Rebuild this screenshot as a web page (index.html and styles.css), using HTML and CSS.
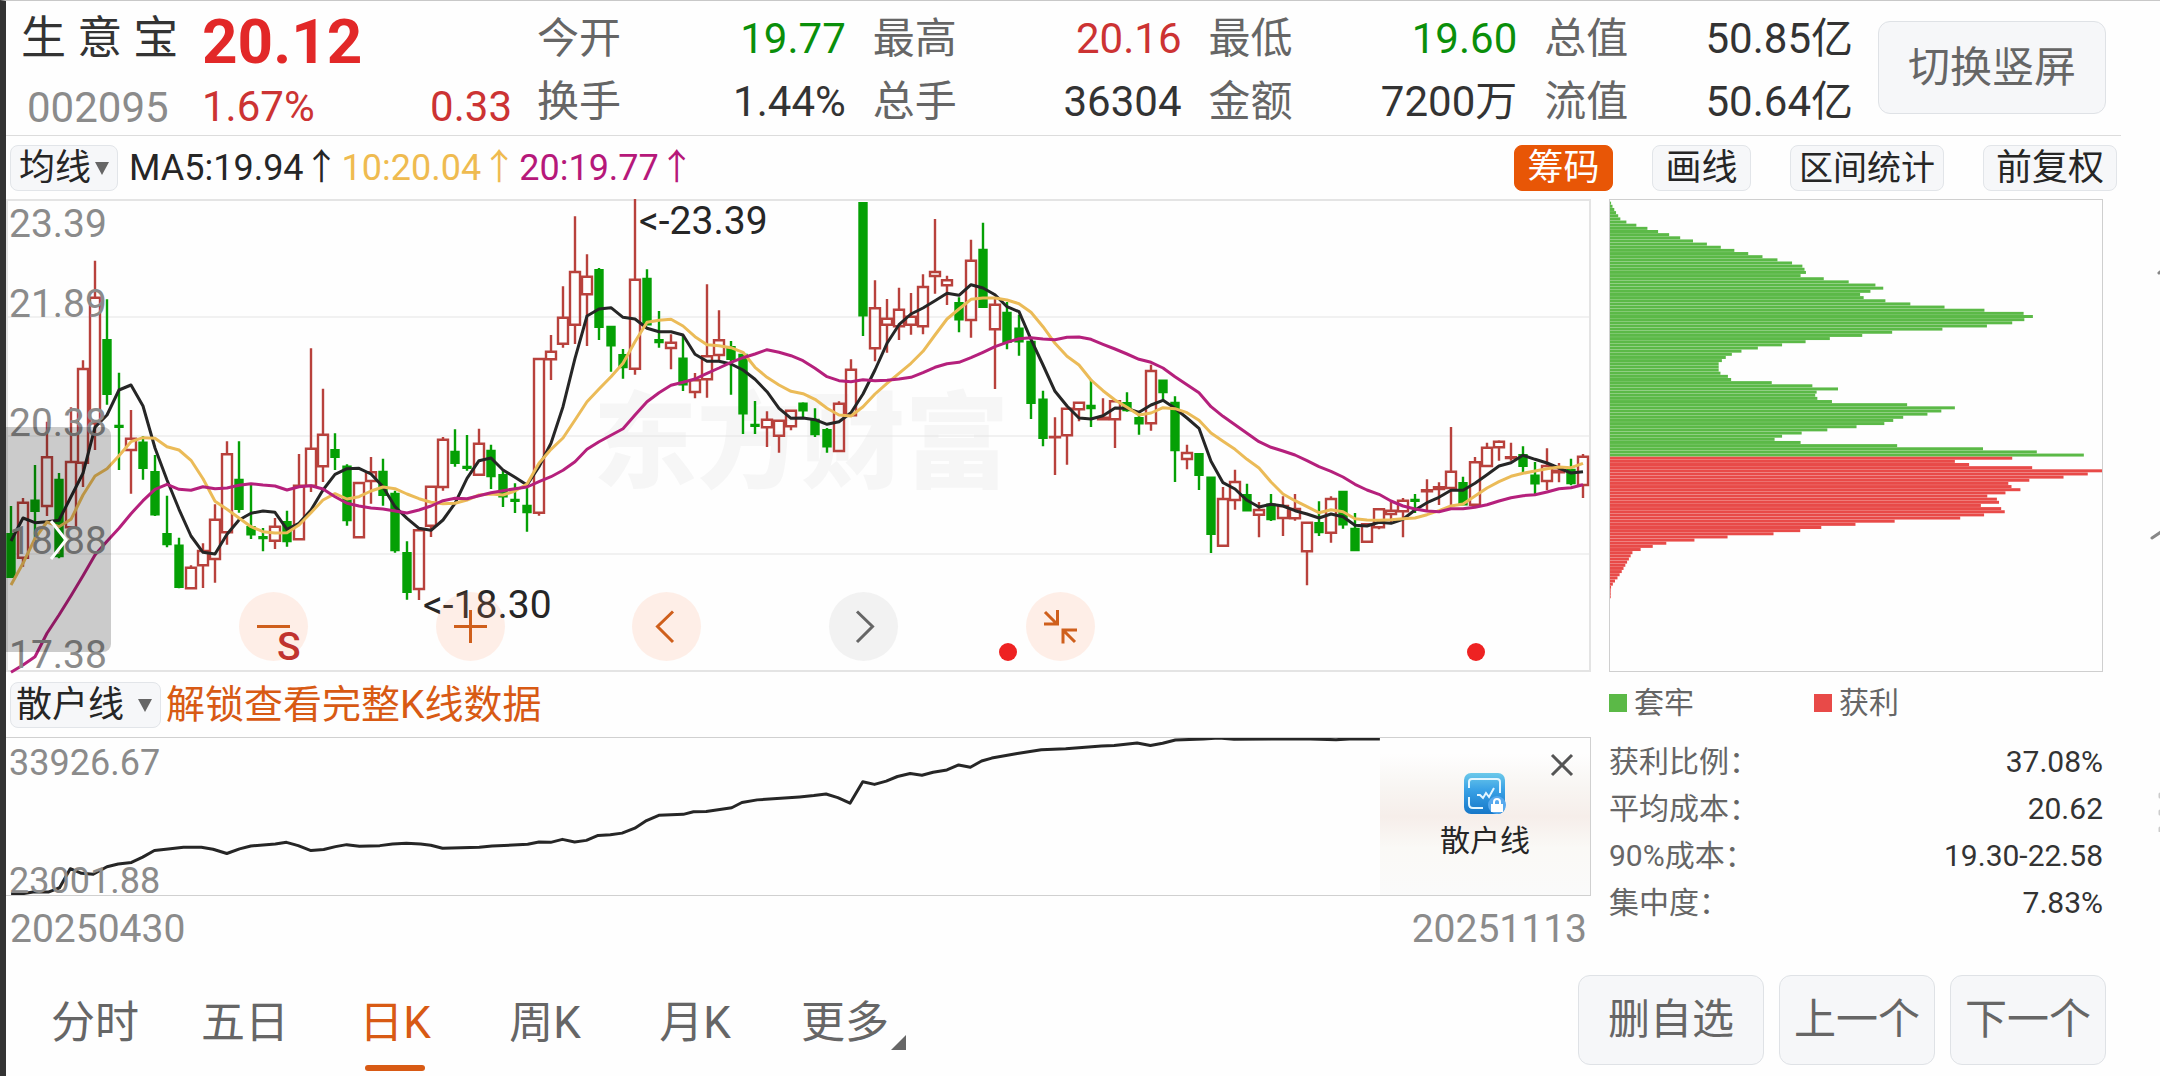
FILE: index.html
```html
<!DOCTYPE html>
<html lang="zh-CN">
<head>
<meta charset="utf-8">
<meta name="viewport" content="width=device-width, initial-scale=1">
<title>生意宝 002095</title>
<link rel="stylesheet" href="styles.css">
</head>
<body>
<header class="header">
  <div class="quote">
    <h1 class="name">生 意 宝</h1>
    <strong class="price">20.12</strong>
    <span class="code">002095</span>
    <div class="change"><span>1.67%</span><span>0.33</span></div>
  </div>
  <dl class="stats">
    <div class="stat"><dt>今开</dt><dd class="down">19.77</dd></div>
    <div class="stat"><dt>最高</dt><dd class="up">20.16</dd></div>
    <div class="stat"><dt>最低</dt><dd class="down">19.60</dd></div>
    <div class="stat"><dt>总值</dt><dd>50.85亿</dd></div>
    <div class="stat"><dt>换手</dt><dd>1.44%</dd></div>
    <div class="stat"><dt>总手</dt><dd>36304</dd></div>
    <div class="stat"><dt>金额</dt><dd>7200万</dd></div>
    <div class="stat"><dt>流值</dt><dd>50.64亿</dd></div>
  </dl>
  <button class="btn btn-rotate" type="button">切换竖屏</button>
</header>

<div class="toolbar">
  <div class="picker picker-ma">
    <select aria-label="主图指标"><option>均线</option></select>
    <svg class="caret" viewBox="0 0 14 13" aria-hidden="true"><path d="M0 0h14L7 13z"/></svg>
  </div>
  <div class="ma-values">
    <span class="ma5">MA5:19.94↑</span>
    <span class="ma10">10:20.04↑</span>
    <span class="ma20">20:19.77↑</span>
  </div>
  <div class="tools">
    <button class="tool tool-on" type="button">筹码</button>
    <button class="tool" type="button">画线</button>
    <button class="tool tool-long" type="button">区间统计</button>
    <button class="tool" type="button">前复权</button>
  </div>
</div>

<main class="main">
  <section class="charts">
    <div class="kline">
      <svg class="plot" viewBox="0 0 1585 473" role="img" aria-label="日K线">
        <text class="watermark" x="587" y="281">东方财富</text>
        <g class="grid">
          <path d="M0 118H1585M0 237H1585M0 355H1585"/>
          <rect x="1" y="1" width="1583" height="471"/>
        </g>
        <g id="candles"></g>
        <g id="averages"></g>
        <g class="axis">
          <text x="3" y="38">23.39</text>
          <text x="3" y="118">21.89</text>
          <text x="3" y="237">20.38</text>
          <text x="3" y="355">18.88</text>
          <text x="3" y="469">17.38</text>
        </g>
        <g class="extreme">
          <text x="633" y="35">&lt;-23.39</text>
          <text x="417" y="419">&lt;-18.30</text>
        </g>
        <circle class="dot" cx="1002" cy="453" r="9"/>
        <circle class="dot" cx="1470" cy="453" r="9"/>
      </svg>
      <div class="controls">
        <button class="round" type="button" aria-label="缩小"><svg viewBox="0 0 69 69"><path d="M18 34.500h33"/></svg></button>
        <button class="round" type="button" aria-label="放大"><svg viewBox="0 0 69 69"><path d="M18 34.500h33M34.500 18v33"/></svg></button>
        <button class="round" type="button" aria-label="左移"><svg viewBox="0 0 69 69"><path d="M41 19.500L25.500 34.500L41 50"/></svg></button>
        <button class="round round-off" type="button" aria-label="右移"><svg viewBox="0 0 69 69"><path d="M28 19.500L43.500 34.500L28 50"/></svg></button>
        <button class="round" type="button" aria-label="收起"><svg viewBox="0 0 69 69"><path d="M19 20L31 32M18 32h13.500V18M49 50L37 38M51 38H37v13.500"/></svg></button>
      </div>
      <span class="sell">S</span>
      <button class="drawer" type="button" aria-label="展开"><svg viewBox="0 0 20 44"><path d="M2 3L17 22L2 41"/></svg></button>
    </div>

    <div class="subbar">
      <div class="picker picker-sub">
        <select aria-label="副图指标"><option>散户线</option></select>
        <svg class="caret" viewBox="0 0 14 13" aria-hidden="true"><path d="M0 0h14L7 13z"/></svg>
      </div>
      <a class="unlock" href="#">解锁查看完整K线数据</a>
    </div>

    <div class="retail">
      <svg class="retail-plot" viewBox="12 200 3106 477" preserveAspectRatio="none" role="img" aria-label="散户线">
        <polyline points="22,673 45,673 65,668 95,668 117,655 138,597 160,611 183,614 210,591 232,583 258,578 280,562 303,542 330,537 360,532 395,532 418,538 445,551 470,537 492,528 540,522 562,517 585,527 610,542 635,539 658,530 680,524 705,529 745,527 770,522 797,520 825,522 845,526 868,535 940,532 965,528 1035,523 1057,516 1080,517 1103,508 1127,516 1150,511 1173,496 1197,494 1220,489 1245,474 1268,451 1292,435 1340,432 1360,424 1385,423 1435,412 1455,396 1485,388 1568,379 1596,375 1620,370 1643,381 1667,398 1692,333 1715,341 1738,331 1760,317 1785,308 1808,313 1830,304 1857,297 1880,282 1903,289 1925,270 1945,261 1995,247 2042,236 2090,233 2160,224 2185,223 2230,215 2256,223 2280,216 2305,206 2360,203 2390,200 2420,204 2500,203 2570,203 2620,205 2655,202 2706,203"/>
      </svg>
      <span class="range range-max">33926.67</span>
      <span class="range range-min">23001.88</span>
      <div class="promo">
        <svg class="promo-icon" viewBox="0 0 42 42" aria-hidden="true">
          <defs><linearGradient id="blue" x1="0" y1="0" x2="0" y2="1"><stop offset="0" stop-color="#6cc9ea"/><stop offset=".4" stop-color="#3aa2e6"/><stop offset="1" stop-color="#1677c8"/></linearGradient></defs>
          <rect width="41" height="41" rx="7" fill="url(#blue)"/>
          <path class="promo-line" d="M5 15V9q0-3 3-3h25q3 0 3 3v11M5 24v7q0 4 4 4h10M13 22h3l3 3 3-5 3 4 5-9"/>
          <circle cx="33" cy="32" r="9" fill="#57a9ee"/>
          <path d="M27 31h12v8H27z" fill="#fff"/>
          <path d="M30 31v-2q0-3 3-3t3 3v2" fill="none" stroke="#fff" stroke-width="2"/>
        </svg>
        <span>散户线</span>
        <button class="close" type="button" aria-label="关闭"><svg viewBox="0 0 24 24"><path d="M2 2L22 22M22 2L2 22"/></svg></button>
      </div>
    </div>
    <div class="dates"><time>20250430</time><time>20251113</time></div>
  </section>

  <aside class="chips">
    <svg class="chip-plot" viewBox="27 28 1381 1418" preserveAspectRatio="none" role="img" aria-label="筹码分布"><g id="chips"></g></svg>
    <ul class="legend"><li class="trapped">套牢</li><li class="profit">获利</li></ul>
    <dl class="facts">
      <div><dt>获利比例：</dt><dd>37.08%</dd></div>
      <div><dt>平均成本：</dt><dd>20.62</dd></div>
      <div><dt>90%成本：</dt><dd>19.30-22.58</dd></div>
      <div><dt>集中度：</dt><dd>7.83%</dd></div>
    </dl>
  </aside>
</main>

<footer class="footer">
  <nav class="tabs">
    <a href="#">分时</a>
    <a href="#">五日</a>
    <a class="current" href="#">日K</a>
    <a href="#">周K</a>
    <a href="#">月K</a>
    <a class="more" href="#">更多</a>
  </nav>
  <div class="actions">
    <button class="btn btn-remove" type="button">删自选</button>
    <button class="btn" type="button">上一个</button>
    <button class="btn" type="button">下一个</button>
  </div>
</footer>

<svg class="edge" viewBox="0 0 10 570" aria-hidden="true"><path d="M9 11L14 7M2 276L14 268"/><path class="edge-dots" d="M10 532v3M10 549v3M10 566v3"/></svg>
<script src="chart.js"></script>
</body>
</html>
```
FILE: styles.css
```css
* { box-sizing: border-box; }

body {
  margin: 0;
  min-height: 100vh;
  position: relative;
  overflow-x: hidden;
  background: #fefefe;
  border-left: 6px solid #333;
  border-top: 1px solid #c8c8c8;
  color: #333;
  font-family: Roboto, "Noto Sans CJK SC", sans-serif;
  font-size: 42px;
}

h1, dl, dd, ul { margin: 0; padding: 0; font-weight: 400; }
button, select { font: inherit; color: inherit; margin: 0; padding: 0; }
button { cursor: pointer; }
a { color: inherit; text-decoration: none; }
svg { display: block; }

.btn {
  height: 90px;
  width: 156px;
  border: 1px solid #dfe2e6;
  border-radius: 12px;
  background: #f6f7f9;
  color: #666;
  font-size: 42px;
  line-height: 88px;
}

/* quote header */
.header {
  display: flex;
  height: 135px;
  margin-right: 39px;
  padding: 6px 15px 0 15px;
  border-bottom: 1px solid #dcdcdc;
}
.quote {
  flex: 0 0 491px;
  display: grid;
  grid-template-columns: 181px 1fr;
  grid-template-rows: 70px 57px;
  margin-right: 25px;
}
.name { font-size: 45px; line-height: 64px; white-space: nowrap; }
.price { font-size: 62px; line-height: 70px; font-weight: 700; color: #e22828; }
.code { padding-left: 6px; line-height: 62px; color: #8b8b8b; }
.change { display: flex; justify-content: space-between; line-height: 60px; color: #cc3333; }
.stats {
  flex: 1;
  display: grid;
  grid-template-columns: repeat(4, 1fr);
  grid-auto-rows: 63px;
  column-gap: 27px;
  line-height: 63px;
}
.stat { display: flex; justify-content: space-between; }
.stat dt { color: #666; }
.up { color: #cc3333; }
.down { color: #0a8f0a; }
.btn-rotate { width: 228px; height: 93px; margin: 14px 0 0 25px; }

/* indicator toolbar */
.toolbar {
  display: flex;
  align-items: center;
  height: 63px;
  padding: 0 43px 0 4px;
  font-size: 36px;
}
.picker { position: relative; height: 46px; font-size: 36px; }
.picker select {
  appearance: none;
  width: 100%;
  height: 100%;
  border: 1px solid #e2e5e9;
  border-radius: 8px;
  background: #f6f7f9;
  color: #262626;
}
.picker-ma { width: 108px; margin-right: 11px; }
.picker-ma select { padding-left: 8px; }
.picker-sub { width: 151px; margin-right: 5px; }
.picker-sub select { padding-left: 5px; }
.caret {
  position: absolute;
  right: 9px;
  top: 17px;
  width: 14px;
  height: 13px;
  fill: #666;
  pointer-events: none;
}
.ma-values { display: flex; gap: 2px; line-height: 46px; white-space: nowrap; }
.ma5 { color: #262626; }
.ma10 { color: #efbb50; }
.ma20 { color: #b6187a; }
.tools { display: flex; gap: 39px; margin-left: auto; }
.tool {
  height: 46px;
  min-width: 99px;
  padding: 0 12px;
  border: 1px solid #e2e5e9;
  border-radius: 8px;
  background: #f6f7f9;
  color: #262626;
  line-height: 44px;
}
.tool-on { border-color: #e85606; background: #e85606; color: #fff; }
.tool-long { padding: 0 8px; font-size: 34px; }

/* charts */
.main {
  display: grid;
  grid-template-columns: 1585fr 494fr;
  column-gap: 18px;
  padding-right: 57px;
}
.kline { position: relative; }
.plot { width: 100%; height: auto; overflow: visible; }
.plot text { font-size: 39px; }
.plot .watermark { font-size: 104px; font-weight: 900; fill: #f6f6f6; }
.grid { fill: none; stroke: #e4e4e4; stroke-width: 1; }
.grid rect { stroke-width: 2; }
.axis { fill: #8b8b8b; }
.extreme { fill: #262626; }
.dot { fill: #ee2222; }
.rise { fill: none; stroke: #b8413c; stroke-width: 2.4; }
.fall { fill: #05a005; stroke: #05a005; stroke-width: 2.4; }
.average { fill: none; stroke-width: 3; stroke-linejoin: round; }
.average.ma5 { stroke: #262626; }
.average.ma10 { stroke: #ebbb58; }
.average.ma20 { stroke: #b5207c; }

.controls {
  position: absolute;
  left: 14.7%;
  bottom: 11px;
  width: 54%;
  display: flex;
  justify-content: space-between;
}
.round {
  width: 69px;
  height: 69px;
  border: 0;
  border-radius: 50%;
  background: rgba(255, 150, 100, .15);
  color: #cf5f1c;
}
.round svg { width: 69px; height: 69px; fill: none; stroke: currentColor; stroke-width: 3; }
.round-off { background: #f2f2f2; color: #666; }
.sell {
  position: absolute;
  left: 17.1%;
  bottom: 3px;
  font-size: 39px;
  line-height: 44px;
  font-weight: 500;
  color: #c0332f;
}
.drawer {
  position: absolute;
  left: 0;
  top: 228px;
  width: 105px;
  height: 225px;
  border: 0;
  border-radius: 0 8px 8px 0;
  background: rgba(0, 0, 0, .2);
}
.drawer svg { width: 20px; height: 44px; margin-left: 43px; fill: none; stroke: #fff; stroke-width: 3; }

.subbar { display: flex; align-items: center; height: 65px; padding-left: 4px; }
.unlock { font-size: 39px; line-height: 46px; color: #d85a14; white-space: nowrap; }

.retail {
  position: relative;
  height: 159px;
  border: 1px solid #d0d0d0;
  border-left: 0;
}
.retail-plot { width: 100%; height: 100%; fill: none; stroke: #262626; }
.retail-plot polyline { stroke-width: 3; stroke-linejoin: round; vector-effect: non-scaling-stroke; }
.range { position: absolute; left: 3px; font-size: 36px; line-height: 36px; color: #8b8b8b; }
.range-max { top: 7px; }
.range-min { bottom: -4px; }
.promo {
  position: absolute;
  top: 0;
  right: 0;
  width: 210px;
  height: 100%;
  padding-top: 35px;
  display: flex;
  flex-direction: column;
  align-items: center;
  gap: 7px;
  background: linear-gradient(#fefefe 10%, #f8f5f2 32%, #f6eeea 50%, #faf9f6 70%, #fafafa);
  font-size: 30px;
  line-height: 38px;
  color: #262626;
}
.promo-icon { width: 42px; height: 42px; overflow: visible; }
.promo-line { fill: none; stroke: #e4f6ff; stroke-width: 2; }
.close {
  position: absolute;
  top: 15px;
  right: 16px;
  border: 0;
  background: none;
}
.close svg { width: 24px; height: 24px; stroke: #555; stroke-width: 3; }
.dates {
  display: flex;
  justify-content: space-between;
  padding: 0 4px;
  font-size: 39px;
  line-height: 66px;
  color: #8b8b8b;
}

/* chip distribution */
.chips { font-size: 30px; }
.chip-plot { width: 100%; height: auto; aspect-ratio: 494 / 473; border: 1px solid #cfcfcf; }
.chip-trapped { fill: #5bb947; }
.chip-profit { fill: #e84a48; }
.legend { display: flex; list-style: none; line-height: 62px; color: #666; }
.legend li { flex: 0 0 41.5%; display: flex; align-items: center; gap: 7px; }
.legend li::before { content: ""; width: 18px; height: 18px; background: #5bb947; }
.legend .profit::before { background: #e84a48; }
.facts { padding-top: 4px; line-height: 47px; }
.facts div { display: flex; justify-content: space-between; }
.facts dt { color: #666; }

/* period tabs */
.footer {
  display: flex;
  justify-content: space-between;
  padding: 13px 54px 0 14px;
}
.tabs { display: flex; font-size: 44px; line-height: 96px; color: #666; }
.tabs a { position: relative; width: 150px; text-align: center; }
.tabs .current { color: #d85a14; }
.current::after {
  content: "";
  position: absolute;
  left: 45px;
  bottom: 0;
  width: 60px;
  height: 6px;
  border-radius: 3px;
  background: #d85a14;
}
.more::after {
  content: "";
  position: absolute;
  right: 14px;
  bottom: 21px;
  border-left: 15px solid transparent;
  border-bottom: 15px solid #666;
}
.actions { display: flex; gap: 15px; }
.btn-remove { width: 186px; }

.edge {
  position: absolute;
  right: 0;
  top: 261px;
  width: 10px;
  height: 570px;
  fill: none;
  stroke: #888;
  stroke-width: 3;
  stroke-linecap: round;
}
.edge-dots { stroke: #ccc; }
```
FILE: chart.js
```js
const NS = 'http://www.w3.org/2000/svg';

function add(parent, tag, attrs) {
  const el = document.createElementNS(NS, tag);
  for (const key in attrs) el.setAttribute(key, attrs[key]);
  parent.appendChild(el);
}

// One session per entry: direction, high, body top, body bottom, low.
// Levels are counted downwards, three to a pixel; 27 is the top of the plot.
const sessions = `
g 948 1033 1160 1160;r 924 938 1103 1130;g 825 932 962 1060;r 695 802 948 978;g 849 870 1098 1105;
r 652 816 1012 1012;r 511 537 818 891;r 212 323 700 780;g 328 451 611 644;g 548 708 710 840;
r 660 746 780 911;g 738 758 833 869;g 795 847 973 978;g 917 1033 1062 1072;g 1043 1067 1190 1195;
r 1126 1133 1195 1195;r 1060 1083 1126 1194;r 943 989 1107 1178;r 754 793 1027 1064;g 754 870 956 968;
g 885 1012 1033 1047;g 1014 1042 1044 1084;r 984 1010 1052 1077;g 962 997 1053 1070;r 792 887 1048 1048;
r 475 776 887 906;r 596 734 829 876;g 730 781 800 840;g 823 830 990 1007;r 879 879 1042 1042;
r 801 847 873 941;g 806 846 914 947;g 902 912 1080 1088;g 1054 1090 1205 1229;r 1021 1021 1197 1230;
r 887 890 1007 1041;r 741 749 891 902;g 718 786 818 830;g 735 831 833 842;r 716 761 854 854;
g 764 783 858 897;g 838 856 919 951;g 880 930 932 969;g 885 948 966 1025;r 507 507 968 977;
r 435 485 508 570;r 289 383 461 473;r 79 246 404 462;r 193 260 313 468;g 234 241 410 450;
g 408 411 466 545;g 477 496 531 566;r 27 269 536 554;g 238 267 403 403;g 363 451 456 473;
r 433 458 474 538;g 437 506 583 603;r 549 571 606 625;r 283 499 568 623;r 361 451 495 512;
g 453 472 506 614;g 493 495 670 732;g 633 705 707 732;r 664 689 712 771;r 692 692 737 788;
r 661 662 709 721;g 637 641 661 683;g 655 690 732 741;g 714 721 769 788;r 634 641 783 783;
r 508 539 676 676;g 40 40 376 438;r 271 355 475 514;r 327 386 404 488;r 293 359 409 450;
r 309 380 404 434;r 253 291 409 433;r 87 246 258 311;r 257 271 286 345;g 322 340 388 427;
r 149 212 390 443;g 98 180 350 350;r 324 344 418 597;g 336 369 455 478;g 374 416 454 497;
g 455 456 638 687;g 602 629 743 769;r 682 741 742 855;r 655 656 736 824;r 638 638 658 694;
g 568 648 654 711;r 625 683 688 688;r 633 634 688 774;g 607 640 660 665;g 672 685 700 734;
r 524 543 700 722;g 570 572 606 632;g 619 639 780 876;r 764 789 807 838;g 790 793 854 900;
g 861 863 1031 1089;r 891 927 1067 1067;r 839 876 930 959;g 881 916 961 962;r 936 960 974 1042;
g 912 944 987 993;r 919 948 984 1038;r 912 957 985 992;r 995 998 1084 1186;g 934 1000 1026 1038;
r 919 927 1028 1058;g 903 906 1003 1016;g 969 1017 1080 1084;r 999 1003 1055 1059;r 957 958 1012 1018;
r 936 962 972 1000;r 924 932 964 1042;g 912 930 932 969;r 868 901 904 964;r 877 892 897 945;
r 711 845 894 946;g 860 880 943 943;r 801 817 944 944;r 758 773 828 828;r 751 755 772 812;
r 758 802 804 812;g 769 796 827 848;g 816 857 880 912;r 775 828 873 901;r 819 842 847 877;
g 806 840 879 886;r 792 800 885 924`;

const averages = {
  ma5: [1053,984,998,995,991,920,850,712,675,600,585,648,774,870,958,1038,1087,1092,1033,990,970,963,967,1018,1000,960,900,853,836,835,852,890,950,985,1015,1021,990,940,865,812,804,840,862,885,830,760,650,505,378,357,353,382,387,415,425,425,435,493,514,514,522,540,568,605,655,685,684,689,703,695,668,612,540,460,404,372,354,332,310,316,284,294,314,350,365,448,525,604,648,684,687,677,654,655,667,645,631,655,684,715,814,878,897,931,951,943,948,962,972,984,972,980,1006,1008,997,1000,988,960,938,922,901,901,880,854,828,818,796,808,819,834,849,845],
  ma10: [1185,1120,1045,996,1010,988,915,858,836,797,755,743,745,770,780,811,866,934,958,984,1010,1025,1029,1028,1005,968,930,911,927,920,903,891,896,912,926,937,941,940,930,915,912,915,903,882,820,778,744,690,635,597,560,520,455,397,391,388,408,440,464,467,473,487,532,562,585,604,611,628,655,675,678,650,612,580,550,520,484,435,387,357,328,324,324,330,341,367,410,460,499,525,570,602,630,652,675,669,653,656,668,691,729,754,778,808,834,876,912,932,950,968,959,965,986,990,991,989,986,984,974,962,948,942,918,894,875,859,850,843,836,831,833,820],
  ma20: [1447,1425,1400,1330,1275,1217,1157,1095,1054,1015,971,932,898,883,898,901,890,896,894,886,881,885,888,900,890,887,897,920,940,948,954,957,963,969,960,948,932,925,926,917,908,902,896,891,875,860,841,815,778,755,736,716,675,635,608,586,577,567,550,534,517,503,492,479,487,497,512,535,560,572,575,569,572,571,567,562,548,532,521,517,503,487,470,457,446,443,447,449,442,441,448,463,477,492,508,517,534,560,584,608,650,679,704,730,755,772,783,795,812,830,844,861,883,900,913,933,948,957,963,965,956,956,952,944,933,923,917,914,906,896,893,884]
};

const px = i => 5 + 12 * i;
const py = level => Math.round((level - 27) / 3 * 10) / 10;

const candles = document.getElementById('candles');
sessions.trim().split(';').forEach((row, i) => {
  const [kind, ...levels] = row.trim().split(' ');
  const [high, top, bottom, low] = levels.map(v => py(+v));
  const x = px(i);
  const half = kind === 'r' ? 5 : 3.5;
  add(candles, 'path', {
    class: kind === 'r' ? 'rise' : 'fall',
    d: `M${x} ${high}V${top}M${x} ${bottom}V${low}M${x - half} ${top}H${x + half}V${bottom}H${x - half}Z`
  });
});

const lines = document.getElementById('averages');
for (const name of ['ma5', 'ma10', 'ma20']) {
  add(lines, 'polyline', {
    class: 'average ' + name,
    points: averages[name].map((v, i) => px(i) + ',' + py(v)).join(' ')
  });
}

// Right end of each chip bar, from the highest price to the lowest.
const trapped = [30,34,39,44,50,56,73,101,132,162,193,224,260,299,338,376,415,455,497,538,567,573,577,562,627,697,772,794,758,729,739,800,870,966,1078,1188,1214,1190,1156,1085,960,819,735,644,576,510,442,396,369,352,341,332,332,332,337,358,367,481,595,667,607,603,609,650,861,995,957,918,850,822,797,719,637,565,510,489,562,833,1074,1225,1357];
const profit = [1156,995,1035,1212,1408,1368,1300,1204,1145,1154,1179,1137,1086,1113,1119,1068,1125,1135,1077,1010,826,716,620,561,486,357,264,185,147,113,90,85,80,75,70,65,60,54,48,41,35,30,29,29,29];
const chips = document.getElementById('chips');
trapped.concat(profit).forEach((end, i) => {
  add(chips, 'rect', {
    class: i < trapped.length ? 'chip-trapped' : 'chip-profit',
    x: 27, y: 33 + 9.48 * i, width: end - 27, height: 9
  });
});
```
